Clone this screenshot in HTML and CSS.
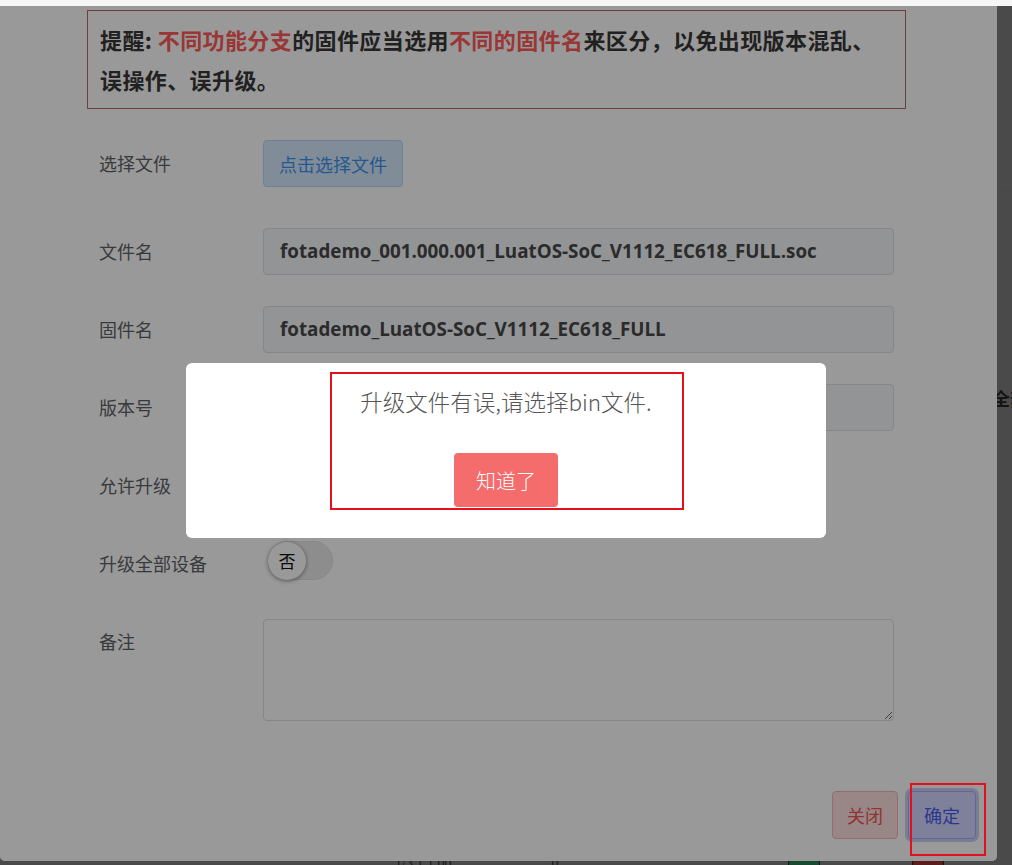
FILE: index.html
```html
<!DOCTYPE html>
<html lang="zh-CN">
<head>
<meta charset="utf-8">
<title>固件上传</title>
<link rel="stylesheet" href="styles.css">
</head>
<body>
<div class="topstrip"></div>
<div class="page">
  <div class="page-head"></div>
  <div class="page-row"><span class="page-text">全部设备</span></div>
  <div class="page-bottom">
    <span class="pb-text pb-ver">1/3.1.1.00</span>
    <span class="pb-text pb-num">0</span>
    <span class="pb-icon pb-green"></span>
    <span class="pb-icon pb-red"></span>
  </div>
</div>

<div class="modal">
  <div class="modal-body">
    <div class="notice">提醒: <span class="hl">不同功能分支</span>的固件应当选用<span class="hl">不同的固件名</span>来区分，以免出现版本混乱、误操作、误升级。</div>
    <div class="form">
      <div class="row row-first">
        <div class="label">选择文件</div>
        <div class="control"><button class="upload-btn" type="button">点击选择文件</button></div>
      </div>
      <div class="row">
        <div class="label">文件名</div>
        <div class="control"><div class="input">fotademo_001.000.001_LuatOS-SoC_V1112_EC618_FULL.soc</div></div>
      </div>
      <div class="row">
        <div class="label">固件名</div>
        <div class="control"><div class="input">fotademo_LuatOS-SoC_V1112_EC618_FULL</div></div>
      </div>
      <div class="row">
        <div class="label">版本号</div>
        <div class="control"><div class="input">001.000.001</div></div>
      </div>
      <div class="row">
        <div class="label">允许升级</div>
        <div class="control"><div class="switch"><span class="knob">否</span></div></div>
      </div>
      <div class="row">
        <div class="label">升级全部设备</div>
        <div class="control"><div class="switch"><span class="knob">否</span></div></div>
      </div>
      <div class="row">
        <div class="label">备注</div>
        <div class="control"><textarea class="textarea"></textarea></div>
      </div>
    </div>
  </div>
  <div class="modal-footer">
    <button class="btn btn-close" type="button">关闭</button>
    <button class="btn btn-ok" type="button">确定</button>
  </div>
  <div class="dim"></div>
</div>

<div class="alert">
  <p class="alert-msg">升级文件有误,请选择bin文件.</p>
  <button class="alert-btn" type="button">知道了</button>
</div>

<div class="mark mark-alert"></div>
<div class="mark mark-ok"></div>
</body>
</html>
```

FILE: styles.css
```css
html, body {
  margin: 0;
  padding: 0;
}
body {
  width: 1012px;
  height: 865px;
  overflow: hidden;
  background: #4a4a4a;
  font-family: "Noto Sans CJK SC", "Noto Sans", sans-serif;
  position: relative;
}
.topstrip {
  height: 6px;
  background: #f6f6f6;
}

/* background page, mostly hidden */
.page {
  height: 859px;
  display: flex;
  flex-direction: column;
  overflow: hidden;
}
.page-head {
  height: 184px;
  flex: none;
  border-bottom: 1px solid #444848;
}
.page-row {
  margin-top: 194px;
  padding-left: 992px;
  white-space: nowrap;
}
.page-text {
  font-size: 18px;
  font-weight: 700;
  color: #141414;
}
.page-bottom {
  margin-top: auto;
  height: 8px;
  flex: none;
  display: flex;
  align-items: flex-start;
  white-space: nowrap;
}
.pb-text {
  font-family: "Liberation Serif", serif;
  font-size: 14px;
  color: #1a1a1a;
  line-height: 14px;
}
.pb-ver { margin-left: 395px; }
.pb-num { margin-left: 100px; }
.pb-icon {
  width: 30px;
  height: 14px;
  border: 1px solid #151515;
}
.pb-green { margin-left: 230px; background: #174a30; }
.pb-red { margin-left: 92px; background: #5a1e1e; }

/* modal */
.modal {
  position: absolute;
  left: 0;
  top: 6px;
  width: 997px;
  height: 855px;
  background: #fff;
  border-radius: 0 0 5px 5px;
  overflow: hidden;
  display: flex;
  flex-direction: column;
}
.modal-body {
  padding: 4px 91px 0 87px;
}
.notice {
  border: 1px solid #b86a6a;
  padding: 8px 24px 9px 12px;
  font-size: 22px;
  font-weight: 700;
  letter-spacing: 0.4px;
  line-height: 40px;
  color: #383838;
}
.hl {
  color: #ff5a5a;
}
.form {
  margin-top: 31px;
  padding-left: 12px;
  display: flex;
  flex-direction: column;
  gap: 31px;
}
.row {
  display: grid;
  grid-template-columns: 164px 631px;
  min-height: 47px;
}
.row-first {
  margin-bottom: 10px;
}
.label {
  font-size: 18px;
  line-height: 47px;
  color: #606266;
}
.control {
  display: flex;
  align-items: flex-start;
}
.upload-btn {
  height: 47px;
  padding: 0 15px;
  border: 1px solid #b7d8fa;
  border-radius: 4px;
  background: #d6e9fd;
  color: #3d95ee;
  font-family: inherit;
  font-size: 18px;
}
.input {
  box-sizing: border-box;
  width: 631px;
  height: 47px;
  padding: 0 16px;
  border: 1px solid #dcdfe6;
  border-radius: 4px;
  background: #f5f7fa;
  font-family: "Open Sans", "Noto Sans CJK SC", sans-serif;
  font-size: 18.8px;
  font-weight: 700;
  line-height: 45px;
  color: #484848;
  white-space: nowrap;
}
.switch {
  box-sizing: border-box;
  margin: 1px 0 0 5px;
  width: 65px;
  height: 39px;
  border: 1px solid #e2e2e2;
  border-radius: 20px;
  background: #ececec;
  display: flex;
  align-items: center;
}
.knob {
  width: 38px;
  height: 38px;
  margin-left: -1px;
  border-radius: 50%;
  background: #fff;
  box-shadow: 0 1px 4px rgba(0, 0, 0, 0.45);
  display: flex;
  align-items: center;
  justify-content: center;
  font-size: 17px;
  color: #111;
}
.textarea {
  box-sizing: border-box;
  width: 631px;
  height: 102px;
  border: 1px solid #dcdfe6;
  border-radius: 4px;
  background: #fff;
  margin: 1px 0 0;
}
.modal-footer {
  margin-top: 70px;
  padding-right: 21px;
  display: flex;
  justify-content: flex-end;
  gap: 10px;
}
.btn {
  height: 48px;
  padding: 0 14px;
  border-radius: 4px;
  font-family: inherit;
  font-size: 18px;
}
.btn-close {
  border: 1px solid #f9b4b4;
  background: #ffe2e2;
  color: #f25555;
}
.btn-ok {
  padding: 0 15px;
  border: 1px solid #a3adf5;
  background: #d3d8ff;
  color: #4b5cf0;
  box-shadow: 0 0 0 3px rgba(120, 135, 240, 0.4);
}
.dim {
  position: absolute;
  inset: 0;
  background: rgba(0, 0, 0, 0.4);
}

/* alert */
.alert {
  position: absolute;
  left: 186px;
  top: 363px;
  width: 640px;
  height: 175px;
  box-sizing: border-box;
  padding-top: 24px;
  background: #fff;
  border-radius: 6px;
  display: flex;
  flex-direction: column;
  align-items: center;
}
.alert-msg {
  margin: 0;
  font-size: 22.5px;
  font-weight: 300;
  line-height: 28px;
  color: #555;
}
.alert-btn {
  margin-top: 38px;
  width: 104px;
  height: 54px;
  border: 0;
  border-radius: 4px;
  background: #f56c6c;
  color: #fff;
  font-family: inherit;
  font-size: 20px;
  font-weight: 300;
}

/* annotation frames */
.mark {
  position: absolute;
  border: 2px solid #e3111f;
  box-sizing: border-box;
}
.mark-alert {
  left: 330px;
  top: 372px;
  width: 354px;
  height: 138px;
}
.mark-ok {
  left: 910px;
  top: 783px;
  width: 76px;
  height: 73px;
}
```
